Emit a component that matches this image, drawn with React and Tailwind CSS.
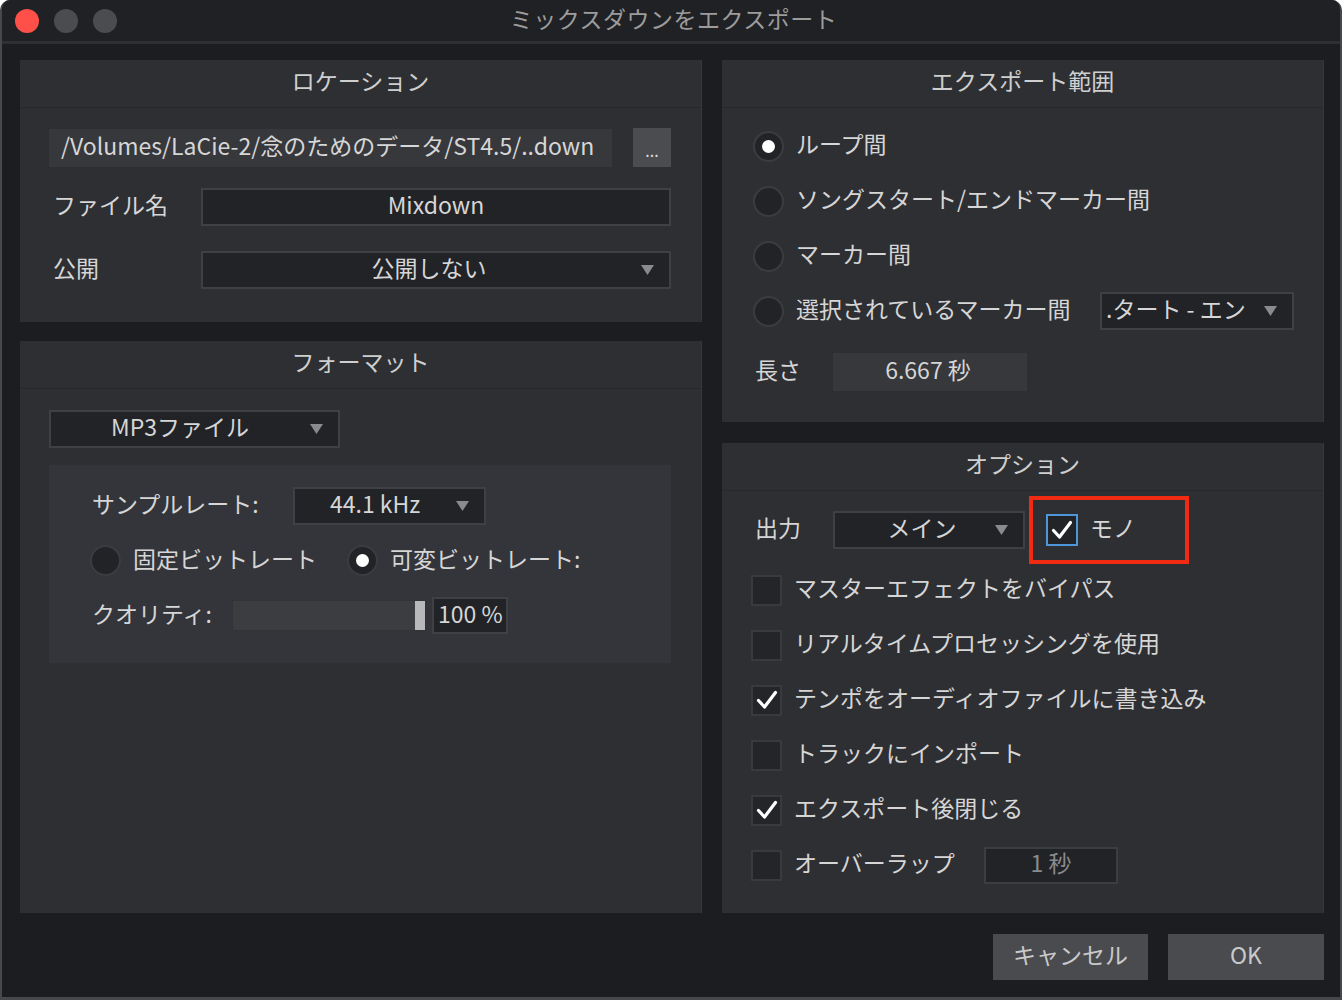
import React from "react";

// shared text style: Noto CJK sits low at leading-none, so lift it a little
const txt = "text-[23px] leading-none pb-[5px] text-[#d6d6d6]";

function Tri() {
  return (
    <svg width="13" height="10" viewBox="0 0 13 10" className="shrink-0">
      <path d="M0 0H13L6.5 10Z" fill="#8a8b8e" />
    </svg>
  );
}

function Radio({ on }) {
  return (
    <span className="w-[31px] h-[31px] rounded-full bg-[#222327] border-2 border-[#3b3c40] flex items-center justify-center shrink-0">
      {on && <span className="w-[13px] h-[13px] rounded-full bg-white" />}
    </span>
  );
}

function Check({ on, blue }) {
  return (
    <span
      className={
        blue
          ? "w-[32px] h-[32px] bg-[#232428] border-2 border-[#4f96d8] flex items-center justify-center shrink-0"
          : "w-[31px] h-[31px] bg-[#242529] border-2 border-[#393a3e] flex items-center justify-center shrink-0"
      }
    >
      {on && (
        <svg width="22" height="20" viewBox="0 0 22 20">
          <path d="M2.5 10.5 L8.5 17 L19.5 2.5" fill="none" stroke="#ffffff" strokeWidth="3.2" strokeLinecap="round" strokeLinejoin="round" />
        </svg>
      )}
    </span>
  );
}

function Panel({ title, className, children }) {
  return (
    <section className={"bg-[#2e2f33] border-r border-[#36373b] flex flex-col " + className}>
      <header className="h-[48px] shrink-0 border-b border-[#27282b] flex items-center justify-center">
        <span className="text-[23px] leading-none pb-[7px] text-[#cfcfcf]">{title}</span>
      </header>
      {children}
    </section>
  );
}

function Select({ w, label, textPad, center }) {
  return (
    <div className={"h-[38px] bg-[#222327] border-2 border-[#3f4044] flex items-center shrink-0 pr-[15px] " + w}>
      <span className={"flex-1 whitespace-nowrap " + txt + " " + (center ? "text-center pl-[14px]" : textPad)}>{label}</span>
      <Tri />
    </div>
  );
}

export default function App() {
  return (
    <div className="w-[1342px] h-[1000px] bg-[#1c1d20] border-x-2 border-b-[3px] border-[#47484b] rounded-t-[10px] flex flex-col font-['Noto_Sans_CJK_JP',sans-serif] overflow-hidden">
      {/* title bar */}
      <div className="h-[41px] shrink-0 bg-[#202124] relative flex items-center">
        <div className="flex items-center gap-[15px] pl-[13px]">
          <span className="w-[24px] h-[24px] rounded-full bg-[#fe5049]" />
          <span className="w-[24px] h-[24px] rounded-full bg-[#4b4c4f]" />
          <span className="w-[24px] h-[24px] rounded-full bg-[#4b4c4f]" />
        </div>
        <div className="flex-1 text-center pr-[110px] pb-[5px] text-[23px] tracking-[0.5px] leading-none text-[#9c9c9c]">ミックスダウンをエクスポート</div>
      </div>
      <div className="h-[3px] shrink-0 bg-[#2e2f32]" />

      <div className="flex gap-[20px] pl-[18px] pt-[16px]">
        {/* left column */}
        <div className="w-[682px] flex flex-col gap-[19px]">
          <Panel title="ロケーション" className="h-[262px]">
            <div className="pl-[29px] pr-[30px] pt-[20px] flex flex-col">
              <div className="flex items-center gap-[21px]">
                <div className="w-[564px] h-[38px] bg-[#37383c] flex items-center pl-[12px] whitespace-nowrap overflow-hidden">
                  <span className={txt}>/Volumes/LaCie-2/念のためのデータ/ST4.5/..down</span>
                </div>
                <div className="w-[38px] h-[39px] bg-[#4b4c50] flex items-end justify-center pb-[9px] text-[16px] leading-none text-[#dedede]">...</div>
              </div>
              <div className="flex items-center mt-[21px]">
                <span className={"w-[152px] pl-[4px] " + txt}>ファイル名</span>
                <div className="flex-1 h-[38px] bg-[#222327] border-2 border-[#3f4044] flex items-center justify-center">
                  <span className={txt}>Mixdown</span>
                </div>
              </div>
              <div className="flex items-center mt-[25px]">
                <span className={"w-[152px] pl-[4px] " + txt}>公開</span>
                <Select w="flex-1" label="公開しない" center />
              </div>
            </div>
          </Panel>

          <Panel title="フォーマット" className="h-[572px]">
            <div className="pl-[29px] pr-[30px] pt-[21px] flex flex-col">
              <Select w="w-[291px]" label="MP3ファイル" textPad="pl-[60px]" />
              <div className="mt-[17px] h-[198px] bg-[#34353a] flex flex-col pl-[43px] pt-[22px]">
                <div className="flex items-center">
                  <span className={"w-[201px] " + txt}>サンプルレート:</span>
                  <Select w="w-[193px]" label="44.1 kHz" textPad="pl-[35px]" />
                </div>
                <div className="flex items-center mt-[20px] -ml-[2px]">
                  <Radio />
                  <span className={"ml-[12px] " + txt}>固定ビットレート</span>
                  <span className="ml-[30px]"><Radio on /></span>
                  <span className={"ml-[12px] " + txt}>可変ビットレート:</span>
                </div>
                <div className="flex items-center mt-[21px]">
                  <span className={"w-[140px] " + txt}>クオリティ:</span>
                  <div className="w-[194px] h-[31px] bg-[#3c3d41] border border-[#323337] flex justify-end">
                    <span className="w-[10px] h-full bg-[#b8b8ba]" />
                  </div>
                  <div className="ml-[6px] w-[76px] h-[37px] bg-[#222327] border-2 border-[#3f4044] flex items-center pl-[4px]">
                    <span className={txt}>100 %</span>
                  </div>
                </div>
              </div>
            </div>
          </Panel>
        </div>

        {/* right column */}
        <div className="w-[602px] flex flex-col gap-[21px]">
          <Panel title="エクスポート範囲" className="h-[362px]">
            <div className="pl-[31px] pt-[19px] flex flex-col gap-[17px]">
              {["ループ間", "ソングスタート/エンドマーカー間", "マーカー間"].map((t, i) => (
                <div key={t} className="h-[38px] flex items-center">
                  <Radio on={i === 0} />
                  <span className={"ml-[12px] " + txt}>{t}</span>
                </div>
              ))}
              <div className="h-[38px] flex items-center">
                <Radio />
                <span className={"ml-[12px] w-[304px] " + txt}>選択されているマーカー間</span>
                <Select w="w-[194px]" label=".タート - エン" textPad="pl-[4px]" />
              </div>
            </div>
            <div className="flex items-center pl-[33px] mt-[23px]">
              <span className={"w-[78px] " + txt}>長さ</span>
              <div className="w-[194px] h-[38px] bg-[#37383c] flex items-center justify-center pr-[4px]">
                <span className={txt}>6.667 秒</span>
              </div>
            </div>
          </Panel>

          <Panel title="オプション" className="h-[470px]">
            <div className="pl-[29px] pt-[5px] flex flex-col">
              <div className="h-[68px] flex items-center">
                <span className={"w-[82px] pl-[4px] " + txt}>出力</span>
                <Select w="w-[192px]" label="メイン" center />
                <div className="ml-[4px] w-[160px] h-[68px] border-4 border-[#f12a12] flex items-center pl-[13px]">
                  <Check on blue />
                  <span className={"ml-[12px] " + txt}>モノ</span>
                </div>
              </div>
              <div className="flex flex-col gap-[17px] mt-[7px]">
                {[
                  ["マスターエフェクトをバイパス", false],
                  ["リアルタイムプロセッシングを使用", false],
                  ["テンポをオーディオファイルに書き込み", true],
                  ["トラックにインポート", false],
                  ["エクスポート後閉じる", true],
                ].map(([t, on]) => (
                  <div key={t} className="h-[38px] flex items-center">
                    <Check on={on} />
                    <span className={"ml-[12px] " + txt}>{t}</span>
                  </div>
                ))}
                <div className="h-[38px] flex items-center">
                  <Check />
                  <span className={"ml-[12px] w-[190px] " + txt}>オーバーラップ</span>
                  <div className="w-[134px] h-[37px] bg-[#222327] border-2 border-[#3c3d41] flex items-center justify-center">
                    <span className="text-[23px] leading-none pb-[5px] text-[#8a8b8e]">1 秒</span>
                  </div>
                </div>
              </div>
            </div>
          </Panel>
        </div>
      </div>

      {/* buttons */}
      <div className="flex justify-end gap-[20px] pr-[16px] pt-[21px]">
        <button className="w-[155px] h-[46px] bg-[#4a4b4f] flex items-center justify-center">
          <span className="text-[23px] leading-none pb-[5px] text-[#c9c9c9]">キャンセル</span>
        </button>
        <button className="w-[156px] h-[46px] bg-[#4a4b4f] flex items-center justify-center">
          <span className="text-[23px] leading-none pb-[5px] text-[#c9c9c9]">OK</span>
        </button>
      </div>
    </div>
  );
}
